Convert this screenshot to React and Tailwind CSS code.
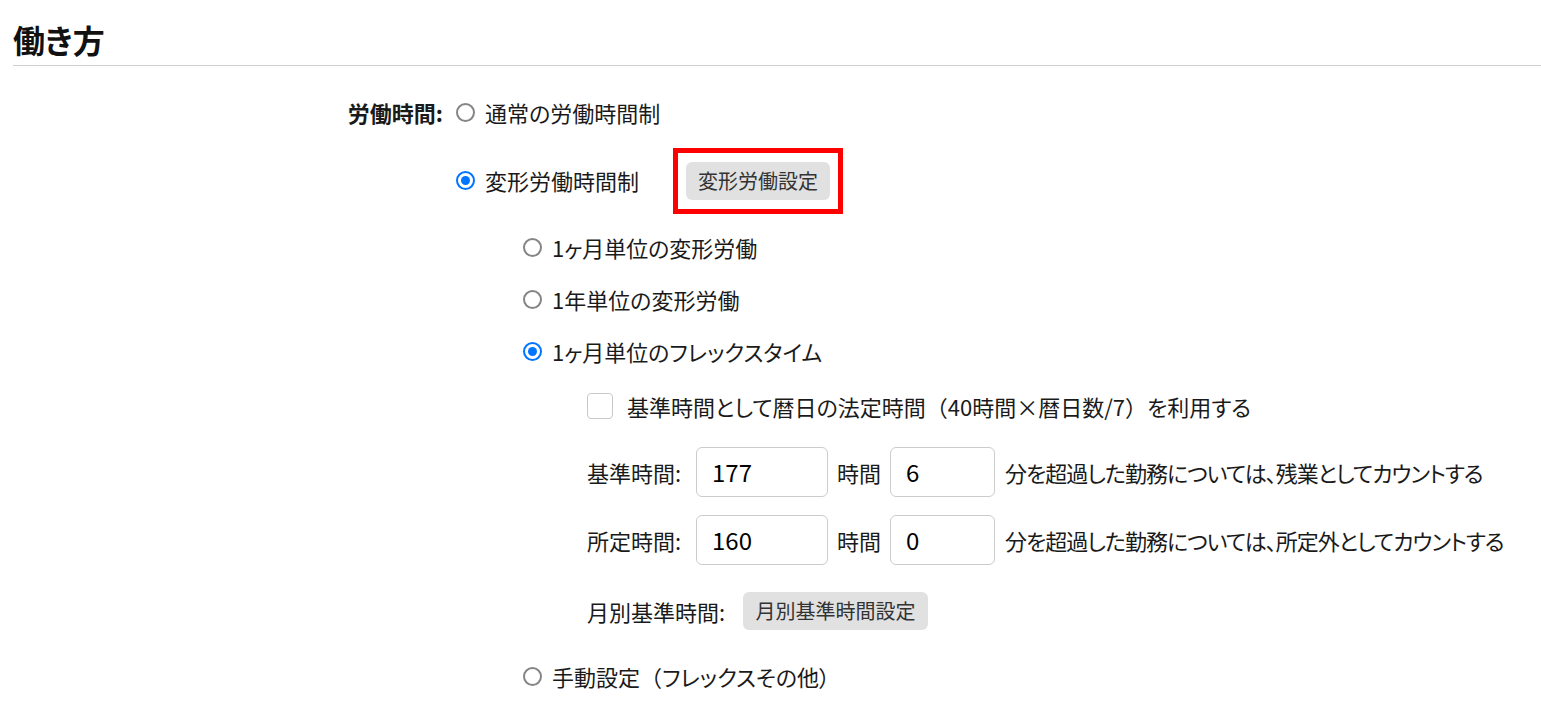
import React from "react";

function Radio({ checked }) {
  return (
    <span
      className={`flex h-[19px] w-[19px] shrink-0 items-center justify-center rounded-full border-2 bg-white ${
        checked ? "border-[#0075ff]" : "border-[#858585]"
      }`}
    >
      {checked && <span className="h-[9px] w-[9px] rounded-full bg-[#0075ff]" />}
    </span>
  );
}

function RadioRow({ checked, label, className = "", children }) {
  return (
    <div className={`flex items-center ${className}`}>
      <Radio checked={checked} />
      <span className="ml-[10px]">{label}</span>
      {children}
    </div>
  );
}

function NumBox({ value, w }) {
  return (
    <div
      className={`flex h-[50px] ${w} items-center rounded-[6px] border border-[#cccccc] bg-white pl-[15px] text-[24px] text-black`}
    >
      {value}
    </div>
  );
}

function GrayButton({ children, w }) {
  return (
    <button
      type="button"
      className={`flex h-[38px] ${w} items-center justify-center rounded-[6px] bg-[#e1e1e1] text-[20px] text-[#333]`}
    >
      {children}
    </button>
  );
}

export default function App() {
  return (
    <div className="min-h-[707px] bg-white pl-[13px] font-['Noto_Sans_CJK_JP',sans-serif] text-[22px] text-[#1a1a1a] [font-feature-settings:'palt']">
      {/* 見出し */}
      <div className="border-b border-[#d0d0d0] pt-[21px] pb-[7px]">
        <h1 className="text-[32px] leading-[37px] font-bold text-[#111]">働き方</h1>
      </div>

      {/* 労働時間 */}
      <div className="mt-[18px] flex h-[56px] items-center">
        <div className="w-[430px] text-right font-bold">労働時間:</div>
        <div className="ml-[13px]">
          <RadioRow checked={false} label="通常の労働時間制" />
        </div>
      </div>

      <div className="ml-[443px]">
        <RadioRow checked label="変形労働時間制" className="h-[81px]">
          <div className="ml-[34px] border-[5px] border-[#ff0000] px-[8px] py-[9px]">
            <GrayButton w="w-[144px]">変形労働設定</GrayButton>
          </div>
        </RadioRow>

        <div className="ml-[67px]">
          <RadioRow checked={false} label="1ヶ月単位の変形労働" className="h-[52px]" />
          <RadioRow checked={false} label="1年単位の変形労働" className="h-[52px]" />
          <RadioRow checked label="1ヶ月単位のフレックスタイム" className="h-[52px]" />

          {/* フレックス詳細 */}
          <div className="ml-[64px]">
            <div className="flex h-[58px] items-center">
              <span className="h-[26px] w-[26px] rounded-[4px] border border-[#c8c8c8] bg-white" />
              <span className="ml-[14px]">
                基準時間として暦日の法定時間
                <span className="[font-feature-settings:normal]">（</span>
                40時間×暦日数/7
                <span className="[font-feature-settings:normal]">）</span>
                を利用する
              </span>
            </div>

            <div className="mt-[12px] flex h-[50px] items-center">
              <span className="w-[100px]">基準時間:</span>
              <div className="ml-[9px]">
                <NumBox value="177" w="w-[132px]" />
              </div>
              <span className="mx-[9px]">時間</span>
              <NumBox value="6" w="w-[105px]" />
              <span className="ml-[10px] tracking-[-1px]">分を超過した勤務については、残業としてカウントする</span>
            </div>

            <div className="mt-[18px] flex h-[50px] items-center">
              <span className="w-[100px]">所定時間:</span>
              <div className="ml-[9px]">
                <NumBox value="160" w="w-[132px]" />
              </div>
              <span className="mx-[9px]">時間</span>
              <NumBox value="0" w="w-[105px]" />
              <span className="ml-[10px] tracking-[-1px]">分を超過した勤務については、所定外としてカウントする</span>
            </div>

            <div className="mt-[27px] flex h-[38px] items-center">
              <span className="w-[147px]">月別基準時間:</span>
              <div className="ml-[9px]">
                <GrayButton w="w-[185px]">月別基準時間設定</GrayButton>
              </div>
            </div>
          </div>

          <RadioRow
            checked={false}
            label={
              <>
                手動設定<span className="[font-feature-settings:normal]">（</span>フレックスその他）
              </>
            }
            className="mt-[26px] h-[40px]"
          />
        </div>
      </div>
    </div>
  );
}
